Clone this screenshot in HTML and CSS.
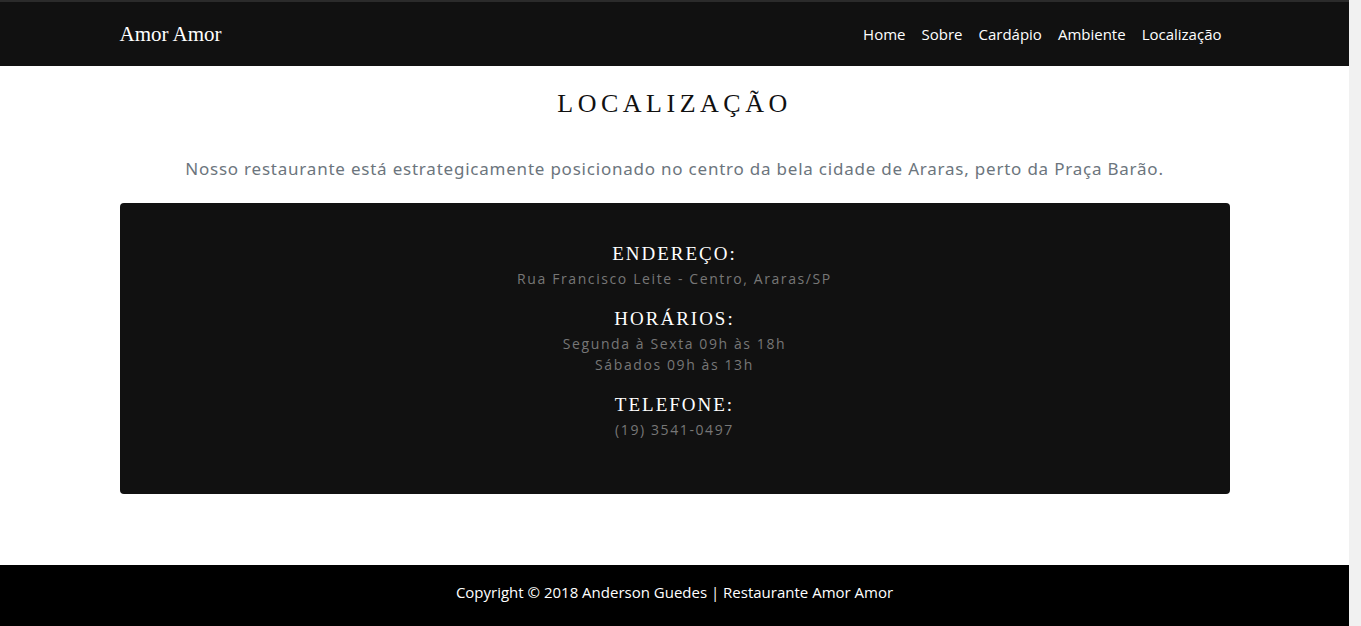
FILE: index.html
```html
<!DOCTYPE html>
<html lang="pt-BR">
<head>
<meta charset="utf-8">
<title>Amor Amor - Localização</title>
<link rel="stylesheet" href="styles.css">
</head>
<body>
<header class="navbar">
  <div class="container nav-inner">
    <a class="brand" href="#">Amor Amor</a>
    <nav class="nav-links">
      <a href="#">Home</a>
      <a href="#">Sobre</a>
      <a href="#">Cardápio</a>
      <a href="#">Ambiente</a>
      <a href="#">Localização</a>
    </nav>
  </div>
</header>
<main class="location">
  <div class="container">
    <h2 class="section-title">Localização</h2>
    <p class="lead">Nosso restaurante está estrategicamente posicionado no centro da bela cidade de Araras, perto da Praça Barão.</p>
    <div class="info-box">
      <div class="info-item">
        <h3 class="info-title">Endereço:</h3>
        <p class="info-text">Rua Francisco Leite - Centro, Araras/SP</p>
      </div>
      <div class="info-item">
        <h3 class="info-title">Horários:</h3>
        <p class="info-text">Segunda à Sexta 09h às 18h<br>Sábados 09h às 13h</p>
      </div>
      <div class="info-item">
        <h3 class="info-title">Telefone:</h3>
        <p class="info-text">(19) 3541-0497</p>
      </div>
    </div>
  </div>
</main>
<footer class="footer">
  <p>Copyright © 2018 Anderson Guedes | Restaurante Amor Amor</p>
</footer>
</body>
</html>
```

FILE: styles.css
```css
html {
  background: #f1f1f1;
}
* {
  box-sizing: border-box;
}
body {
  margin: 0;
  width: 1349px;
  font-family: "Open Sans", "Liberation Sans", sans-serif;
  background: #fff;
}
.container {
  width: 1140px;
  margin: 0 auto;
  padding: 0 15px;
}
.navbar {
  background: #111;
  border-top: 2px solid #2b2b2b;
  height: 66px;
}
.nav-inner {
  display: flex;
  align-items: center;
  justify-content: space-between;
  height: 64px;
}
.brand {
  font-family: "Liberation Serif", serif;
  font-size: 21px;
  color: #fff;
  text-decoration: none;
}
.nav-links {
  display: flex;
}
.nav-links a {
  color: #fff;
  text-decoration: none;
  font-size: 15px;
  padding: 0 8px;
}
.location {
  height: 499px;
  padding-top: 22px;
  text-align: center;
}
.section-title {
  margin: 0;
  font-family: "Liberation Serif", serif;
  font-weight: 400;
  font-size: 26px;
  letter-spacing: 4.5px;
  text-transform: uppercase;
  color: #111;
  line-height: 32px;
}
.lead {
  margin: 36px 0 0;
  font-family: "Noto Sans", sans-serif;
  font-size: 17px;
  letter-spacing: 0.78px;
  color: #6c757d;
  line-height: 26px;
}
.info-box {
  margin-top: 21px;
  background: #111;
  border-radius: 4px;
  padding: 39px 0 54px;
  display: flex;
  flex-direction: column;
  gap: 18px;
}
.info-title {
  margin: 0;
  font-family: "Liberation Serif", serif;
  font-weight: 400;
  font-size: 19px;
  letter-spacing: 2px;
  text-transform: uppercase;
  color: #fff;
  line-height: 24px;
}
.info-text {
  margin: 2px 0 0;
  font-size: 14px;
  letter-spacing: 1.6px;
  color: #777;
  line-height: 21px;
}
.footer {
  background: #000;
  height: 61px;
  padding-bottom: 8px;
  display: flex;
  align-items: center;
  justify-content: center;
}
.footer p {
  margin: 0;
  color: #fff;
  font-size: 15px;
}
```
